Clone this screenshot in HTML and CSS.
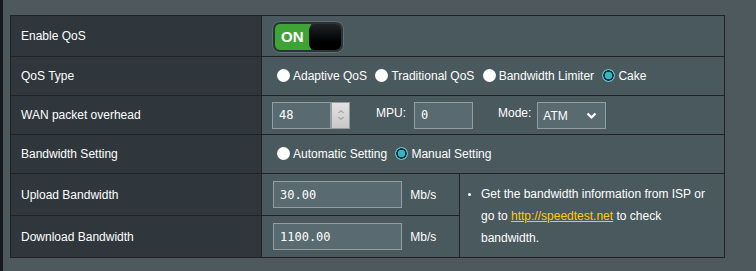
FILE: index.html
```html
<!DOCTYPE html>
<html lang="en">
<head>
    <meta charset="UTF-8">
    <meta name="viewport" content="width=device-width, initial-scale=1.0">
    <title>QoS</title>
    <link rel="stylesheet" href="styles.css">
</head>
<body>
    <table class="form-table">
        <colgroup>
            <col class="col-label">
            <col class="col-field">
            <col class="col-hint">
        </colgroup>
        <tr class="row-tall">
            <th>Enable QoS</th>
            <td colspan="2">
                <div class="switch">
                    <span class="switch-on">ON</span>
                    <span class="switch-knob"></span>
                </div>
            </td>
        </tr>
        <tr>
            <th>QoS Type</th>
            <td colspan="2">
                <label class="radio"><input type="radio" name="qos">Adaptive QoS</label>
                <label class="radio"><input type="radio" name="qos">Traditional QoS</label>
                <label class="radio"><input type="radio" name="qos">Bandwidth Limiter</label>
                <label class="radio"><input type="radio" name="qos" checked>Cake</label>
            </td>
        </tr>
        <tr>
            <th>WAN packet overhead</th>
            <td colspan="2">
                <div class="inline-fields">
                    <div class="number-box">
                        <input class="text-input input-short" type="text" value="48">
                        <span class="spinner">
                            <svg width="8" height="14" viewBox="0 0 8 14"><path d="M1.5 5 L4 2.5 L6.5 5 M1.5 9 L4 11.5 L6.5 9" fill="none" stroke="#888" stroke-width="1"/></svg>
                        </span>
                    </div>
                    <span class="field-label label-mpu">MPU:</span>
                    <input class="text-input input-short" type="text" value="0">
                    <span class="field-label label-mode">Mode:</span>
                    <div class="select-box">
                        <span>ATM</span>
                        <svg width="11" height="8" viewBox="0 0 11 8"><path d="M1.5 1.5 L5.5 5.5 L9.5 1.5" fill="none" stroke="#fff" stroke-width="2.2"/></svg>
                    </div>
                </div>
            </td>
        </tr>
        <tr>
            <th>Bandwidth Setting</th>
            <td colspan="2">
                <label class="radio"><input type="radio" name="bw">Automatic Setting</label>
                <label class="radio"><input type="radio" name="bw" checked>Manual Setting</label>
            </td>
        </tr>
        <tr class="row-wide">
            <th>Upload Bandwidth</th>
            <td>
                <input class="text-input input-long" type="text" value="30.00">
                <span class="unit">Mb/s</span>
            </td>
            <td rowspan="2" class="hint">
                <ul>
                    <li>Get the bandwidth information from ISP or go to <a href="#">http://speedtest.net</a> to check bandwidth.</li>
                </ul>
            </td>
        </tr>
        <tr class="row-wide">
            <th>Download Bandwidth</th>
            <td>
                <input class="text-input input-long" type="text" value="1100.00">
                <span class="unit">Mb/s</span>
            </td>
        </tr>
    </table>
</body>
</html>
```

FILE: styles.css
```css
body {
    margin: 0;
    height: 271px;
    background-color: #4d595d;
    border-left: 3px solid #161a1c;
    font-family: Arial, "Liberation Sans", sans-serif;
    font-size: 12px;
    color: #ffffff;
    overflow: hidden;
}
.form-table {
    border-collapse: collapse;
    table-layout: fixed;
    width: 715px;
    margin: 15px 0 0 7px;
}
.col-label {
    width: 251px;
}
.col-field {
    width: 198px;
}
.form-table tr {
    height: 39px;
}
.form-table tr.row-tall {
    height: 41px;
}
.form-table tr.row-wide {
    height: 42px;
}
.form-table th,
.form-table td {
    border: 1px solid #222222;
    padding: 0 10px;
    vertical-align: middle;
}
.form-table th {
    background-color: #2f373d;
    text-align: left;
    font-weight: normal;
    padding-left: 10px;
}
.form-table td {
    background-color: #4a595d;
}

/* switch */
.switch {
    width: 66px;
    height: 26px;
    padding: 2px;
    border: 1px solid #5f6d71;
    border-radius: 8px;
    background-color: #2c3438;
    display: flex;
    margin-top: 1px;
}
.switch-on {
    width: 36px;
    background-color: #3ea436;
    border-radius: 5px 0 0 5px;
    font-size: 15px;
    font-weight: bold;
    line-height: 26px;
    padding-left: 6px;
    box-sizing: border-box;
}
.switch-knob {
    flex: 1;
    margin-left: -2px;
    border-radius: 6px;
    background: linear-gradient(#1e2427, #000000 70%);
}

/* radios */
.radio {
    white-space: nowrap;
}
.radio input {
    appearance: none;
    width: 13px;
    height: 13px;
    margin: 0 3px 0 5px;
    border-radius: 50%;
    background-color: #ffffff;
    vertical-align: -2px;
}
.radio input:checked {
    background: radial-gradient(circle, #33b3c3 0, #33b3c3 3.5px, #16343a 4px, #16343a 5px, #5ec3cf 5.5px);
}

/* inputs */
.inline-fields {
    display: flex;
    align-items: center;
}
.number-box {
    display: flex;
}
.text-input {
    height: 27px;
    box-sizing: border-box;
    border: 1px solid #929ea1;
    background-color: #596b70;
    color: #ffffff;
    font-family: "DejaVu Sans Mono", monospace;
    font-size: 12px;
    padding: 0 0 0 6px;
    margin: 0;
    outline: none;
}
.input-short {
    width: 59px;
}
.input-long {
    width: 129px;
    margin-left: 1px;
}
.spinner {
    width: 19px;
    height: 27px;
    box-sizing: border-box;
    border: 1px solid #9a9a9a;
    background: linear-gradient(#e2e2e2, #c8c8c8);
    display: flex;
    align-items: center;
    justify-content: center;
}
.field-label {
    margin-top: -4px;
}
.label-mpu {
    margin: -4px 8px 0 26px;
}
.label-mode {
    margin: -4px 6px 0 25px;
}
.select-box {
    width: 69px;
    height: 27px;
    box-sizing: border-box;
    border: 1px solid #929ea1;
    background-color: #596b70;
    display: flex;
    align-items: center;
    justify-content: space-between;
    padding: 2px 8px 0 5px;
    font-size: 12px;
}
.unit {
    margin-left: 5px;
}

/* hint */
.form-table td.hint {
    padding: 0 8px 0 7px;
}
.hint ul {
    margin: 0;
    padding-left: 14px;
    list-style: disc;
}
.hint li {
    line-height: 22px;
}
.hint li::marker {
    font-size: 10px;
}
.hint a {
    color: #ffcc00;
}
```
